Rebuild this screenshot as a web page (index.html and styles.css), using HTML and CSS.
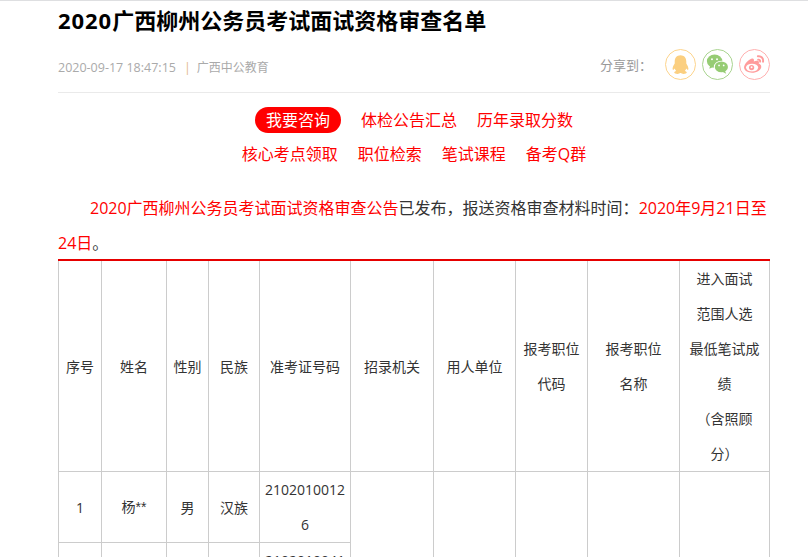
FILE: index.html
```html
<!DOCTYPE html>
<html lang="zh-CN">
<head>
<meta charset="utf-8">
<title>2020广西柳州公务员考试面试资格审查名单</title>
<link rel="stylesheet" href="styles.css">
</head>
<body>
<main class="article">
  <h1 class="title"><span class="year">2020</span>广西柳州公务员考试面试资格审查名单</h1>
  <div class="meta">
    <div class="info"><span class="time">2020-09-17 18:47:15</span><span class="sep">|</span><span class="source">广西中公教育</span></div>
    <div class="share">
      <span class="share-label">分享到：</span>
      <a class="share-btn qq" href="#"><svg viewBox="0 0 30 30" width="29" height="29"><path fill="#fbcf80" d="M15 5.500c-3.900 0-6 2.900-6 6.300v2.200c-1.300 2-2.200 4-2.200 5.500 0 1 .5 1.300 1 .9l1.200-1.200c.3 1 .8 1.900 1.500 2.600-1.200.4-2 1-2 1.600 0 .9 1.600 1.300 3.500 1.300 1.200 0 2.100-.3 2.700-.8h.6c.6.500 1.500.8 2.700.8 1.900 0 3.500-.4 3.500-1.300 0-.6-.8-1.200-2-1.600.7-.7 1.200-1.600 1.500-2.600l1.200 1.200c.5.400 1 .1 1-.9 0-1.500-.9-3.500-2.200-5.500v-2.200c0-3.400-2.100-6.300-6-6.300z"/></svg></a>
      <a class="share-btn wx" href="#"><svg viewBox="0 0 30 30" width="29" height="29"><ellipse fill="#96cc74" cx="12" cy="11.500" rx="8" ry="6.800"/><path fill="#96cc74" d="M7.500 15.500l-1 4 4-2z"/><ellipse fill="#fff" cx="19" cy="17.500" rx="7.800" ry="6.500"/><ellipse fill="#96cc74" cx="19" cy="17.500" rx="6.800" ry="5.600"/><path fill="#96cc74" d="M22.500 21l1.500 3.500-4-2z"/><circle fill="#fff" cx="9.300" cy="9.500" r="1"/><circle fill="#fff" cx="14.500" cy="9.500" r="1"/><circle fill="#fff" cx="16.600" cy="16" r=".9"/><circle fill="#fff" cx="21.400" cy="16" r=".9"/></svg></a>
      <a class="share-btn wb" href="#"><svg viewBox="0 0 30 30" width="29" height="29"><path fill="#ff9c9c" d="M12.500 23.500c-4.600 0-8.300-2.200-8.300-5.300 0-3.600 5-8.600 8.200-9.300 1.800-.3 2.400 1.100 1.900 2.900 2.100-.9 5-1.200 5.300.6.100.7-.1 1.200-.3 1.600 1.600.5 2.700 1.600 2.700 3.200 0 3.200-4.600 6.300-9.500 6.300z"/><ellipse fill="#fff" cx="12.500" cy="18.200" rx="6.300" ry="4.100"/><circle fill="#ff9c9c" cx="12" cy="18.200" r="2.700"/><circle fill="#fff" cx="12" cy="17.800" r="1"/><path fill="none" stroke="#ff9c9c" stroke-width="2" stroke-linecap="round" d="M18.500 6.500c3.400-.7 6 2.100 5.300 5.600M18.800 10c1.400-.2 2.200.8 2 2.100"/></svg></a>
    </div>
  </div>
  <nav class="links">
    <div class="link-row"><a class="pill" href="#">我要咨询</a><a href="#">体检公告汇总</a><a href="#">历年录取分数</a></div>
    <div class="link-row"><a href="#">核心考点领取</a><a href="#">职位检索</a><a href="#">笔试课程</a><a href="#">备考Q群</a></div>
  </nav>
  <p class="notice"><a href="#">2020广西柳州公务员考试面试资格审查公告</a>已发布，报送资格审查材料时间：<a href="#">2020年9月21日至24日</a>。</p>
  <table class="roster">
    <colgroup>
      <col class="c1"><col class="c2"><col class="c3"><col class="c4"><col class="c5"><col class="c6"><col class="c7"><col class="c8"><col class="c9"><col class="c10">
    </colgroup>
    <tr>
      <td>序号</td><td>姓名</td><td>性别</td><td>民族</td><td>准考证号码</td><td>招录机关</td><td>用人单位</td><td>报考职位<br>代码</td><td>报考职位<br>名称</td><td>进入面试<br>范围人选<br>最低笔试成绩<br>（含照顾分）</td>
    </tr>
    <tr>
      <td>1</td><td class="name">杨**</td><td>男</td><td>汉族</td><td>21020100126</td><td rowspan="2"></td><td rowspan="2"></td><td rowspan="2"></td><td rowspan="2"></td><td rowspan="2"></td>
    </tr>
    <tr>
      <td></td><td></td><td></td><td></td><td>21020100411</td>
    </tr>
  </table>
</main>
</body>
</html>
```
FILE: styles.css
```css
html, body {
  margin: 0;
  padding: 0;
  height: 557px;
  overflow: hidden;
  background: #fff;
}
body {
  border-top: 1px solid #dedfe1;
  box-sizing: border-box;
  font-family: "Open Sans", "Noto Sans CJK SC", sans-serif;
  color: #333;
  text-spacing-trim: space-all;
}
a {
  color: #f00;
  text-decoration: none;
}
.article {
  width: 712px;
  margin-left: 58px;
}
.title {
  margin: 0;
  padding-top: 4px;
  font-size: 22px;
  line-height: 30px;
  font-weight: 700;
  color: #000;
}
.year {
  letter-spacing: 0.95px;
}
.meta {
  display: flex;
  justify-content: space-between;
  align-items: center;
  height: 57px;
  border-bottom: 1px solid #eaeaea;
}
.info {
  font-size: 12.5px;
  color: #aaa;
  margin-top: 6px;
}
.sep {
  margin: 0 6px 0 8px;
  color: #e3b98f;
}
.source {
  font-size: 12px;
}
.share {
  display: flex;
  align-items: center;
  margin-top: 2px;
}
.share-label {
  font-size: 13px;
  color: #999;
  margin-right: 7px;
}
.share-btn {
  display: block;
  box-sizing: border-box;
  width: 31px;
  height: 31px;
  margin-left: 6px;
  border-radius: 50%;
  border: 1px solid;
}
.share-btn svg {
  display: block;
}
.qq { border-color: #fdd48c; }
.wx { border-color: #a9d48f; }
.wb { border-color: #ffb0b0; }
.links {
  padding-top: 10px;
}
.link-row {
  display: flex;
  justify-content: center;
  align-items: center;
  gap: 20px;
  font-size: 16px;
  line-height: 26px;
  height: 34px;
}
.pill {
  background: #f00;
  color: #fff;
  border-radius: 13px;
  padding: 0 11px;
}
.notice {
  margin: 20px 0 -2px;
  font-size: 16px;
  line-height: 35px;
  text-indent: 32px;
}
.roster {
  width: 711px;
  table-layout: fixed;
  border-collapse: collapse;
  border-top: 2px solid #e60000;
  font-size: 14px;
  line-height: 35px;
  text-align: center;
  color: #333;
}
.roster td {
  border: 1px solid #ccc;
  padding: 0 4px;
  vertical-align: middle;
  word-break: break-all;
}
.roster tr:first-child td {
  border-top: 0;
}
.roster .name {
  font-family: "Liberation Sans", "Noto Sans CJK SC", sans-serif;
}
.c1 { width: 43px; }
.c2 { width: 65px; }
.c3 { width: 42px; }
.c4 { width: 51px; }
.c5 { width: 91px; }
.c6 { width: 83px; }
.c7 { width: 82px; }
.c8 { width: 72px; }
.c9 { width: 92px; }
.c10 { width: 90px; }
```
